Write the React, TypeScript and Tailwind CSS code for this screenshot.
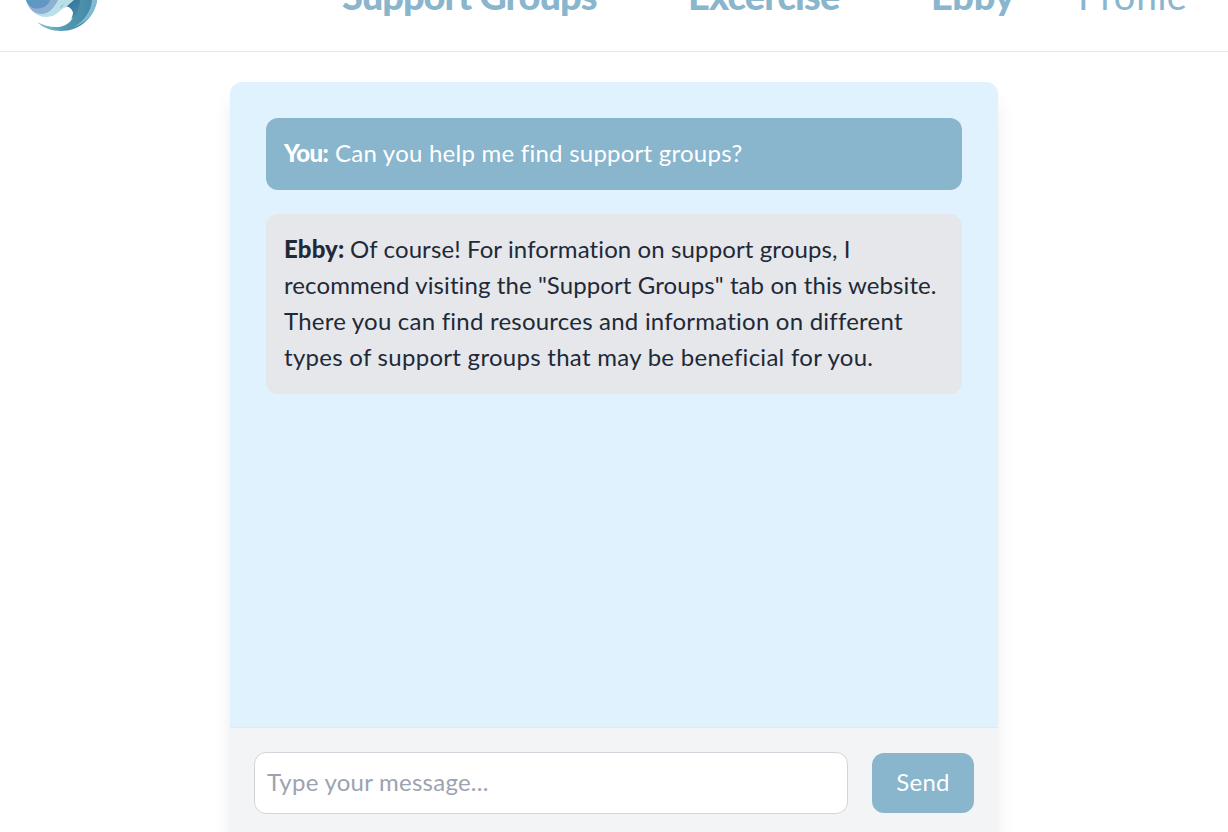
import { useState } from "react"

const NAV_ITEMS = [
  { label: "Support Groups", style: "ml-[342px] w-[346px] font-black tracking-[-0.98px]" },
  { label: "Excercise", style: "w-[243px] font-black tracking-[-0.8px]" },
  { label: "Ebby", style: "w-[147px] font-black tracking-[-0.4px]" },
  { label: "Profile", style: "font-normal tracking-[0.1px]" },
]

function Logo() {
  return (
    <svg className="absolute left-0 top-0" width="120" height="40" viewBox="0 0 120 40" aria-label="Ebby">
      <defs>
        <linearGradient id="wave" x1="0" y1="0" x2="1" y2="0">
          <stop offset="0" stopColor="#8cc6d4" />
          <stop offset="0.45" stopColor="#529bb3" />
          <stop offset="1" stopColor="#4385a5" />
        </linearGradient>
        <linearGradient id="ball" x1="0" y1="0" x2="1" y2="1">
          <stop offset="0" stopColor="#5a9bc2" />
          <stop offset="1" stopColor="#6a92c0" />
        </linearGradient>
        <linearGradient id="shade" x1="0" y1="0" x2="1" y2="1">
          <stop offset="0" stopColor="#2f6a92" />
          <stop offset="1" stopColor="#4a90ae" />
        </linearGradient>
      </defs>
      {/* left ball, one shape for each band */}
      <path d="M26 0C29 10 37 17 46 17C57 17 61 8 68 0Z" fill="#b8e0e8" />
      <path d="M26 0C29 9 34 14 41 14C49 14 54 8 58 0Z" fill="#8fb0d4" />
      <path d="M26 0C28 6 32 9 38 8.5C45 8 49 4 50 0Z" fill="url(#ball)" />
      {/* crest and tail */}
      <path d="M68 0L60 8C65 5 71 6 73 12C75 20 66 27 57 27C49 27 43 25 37 22C43 28 52 31 61 31C80 31 94 18 97 0Z" fill="url(#wave)" />
      <path d="M68 0L60 8C65 5 71 6 73 12C73 15 72 17 71 19C77 15 80 8 80 0Z" fill="url(#shade)" />
      <path d="M66 0C63 6 57 13 49 16.500C57 16 60 9 66 7L74 0Z" fill="#b8e0e8" />
      <path d="M92 0C91 11 85 20 74 27C88 22 96 12 97 0Z" fill="#7fbacf" />
    </svg>
  )
}

function Header() {
  return (
    <header className="relative h-[52px] overflow-hidden border-b border-[#e5e7eb] bg-white">
      <Logo />
      <nav className="-mt-[30px] flex whitespace-nowrap text-[38px] leading-[50px] text-[#89b5cd]">
        {NAV_ITEMS.map((item) => (
          <a key={item.label} className={item.style}>{item.label}</a>
        ))}
      </nav>
    </header>
  )
}

function Messages() {
  return (
    <div className="flex h-[645px] flex-col gap-6 p-9">
      <div className="whitespace-nowrap rounded-xl bg-[#89b5cd] px-[18px] pb-[19px] pt-[17px] text-white">
        <strong className="inline-block w-[51px] font-black tracking-[-0.7px]">You:</strong>
        <span className="tracking-[0.24px]">Can you help me find support groups?</span>
      </div>
      <div className="whitespace-nowrap rounded-xl bg-[#e5e7eb] px-[18px] pb-[19px] pt-[17px] text-[#1f2937]">
        <p>
          <strong className="inline-block w-[66px] font-black tracking-[0.1px]">Ebby:</strong>
          <span className="tracking-[0.11px]">Of course! For information on support groups, I</span>
        </p>
        <p className="tracking-[0.09px]">recommend visiting the "Support Groups" tab on this website.</p>
        <p className="tracking-[0.22px]">There you can find resources and information on different</p>
        <p className="tracking-[0.28px]">types of support groups that may be beneficial for you.</p>
      </div>
    </div>
  )
}

function App() {
  const [message, setMessage] = useState("")
  return (
    <div className="h-screen overflow-hidden bg-white font-['Lato',sans-serif] text-2xl leading-9">
      <Header />
      <main className="mx-auto mt-[30px] h-[780px] w-[768px] overflow-hidden rounded-xl bg-[#e0f2fe] shadow-[0_15px_22px_-4px_rgba(0,0,0,0.1),0_6px_9px_-6px_rgba(0,0,0,0.1)]">
        <Messages />
        <form className="flex h-[140px] items-start gap-6 border-t border-[#e5e7eb] bg-[#f3f4f6] p-6">
          <input
            className="h-[62px] min-w-0 flex-1 rounded-xl border border-[#d1d5db] bg-white px-3 pb-[3px] tracking-[0.25px] placeholder:text-[#9ca3af]"
            placeholder="Type your message..."
            value={message}
            onChange={(e) => setMessage(e.target.value)}
          />
          <button type="button" className="mt-px h-[60px] w-[102px] rounded-xl bg-[#89b5cd] pb-0.5 tracking-[0.2px] text-white">Send</button>
        </form>
      </main>
    </div>
  )
}
export default App
